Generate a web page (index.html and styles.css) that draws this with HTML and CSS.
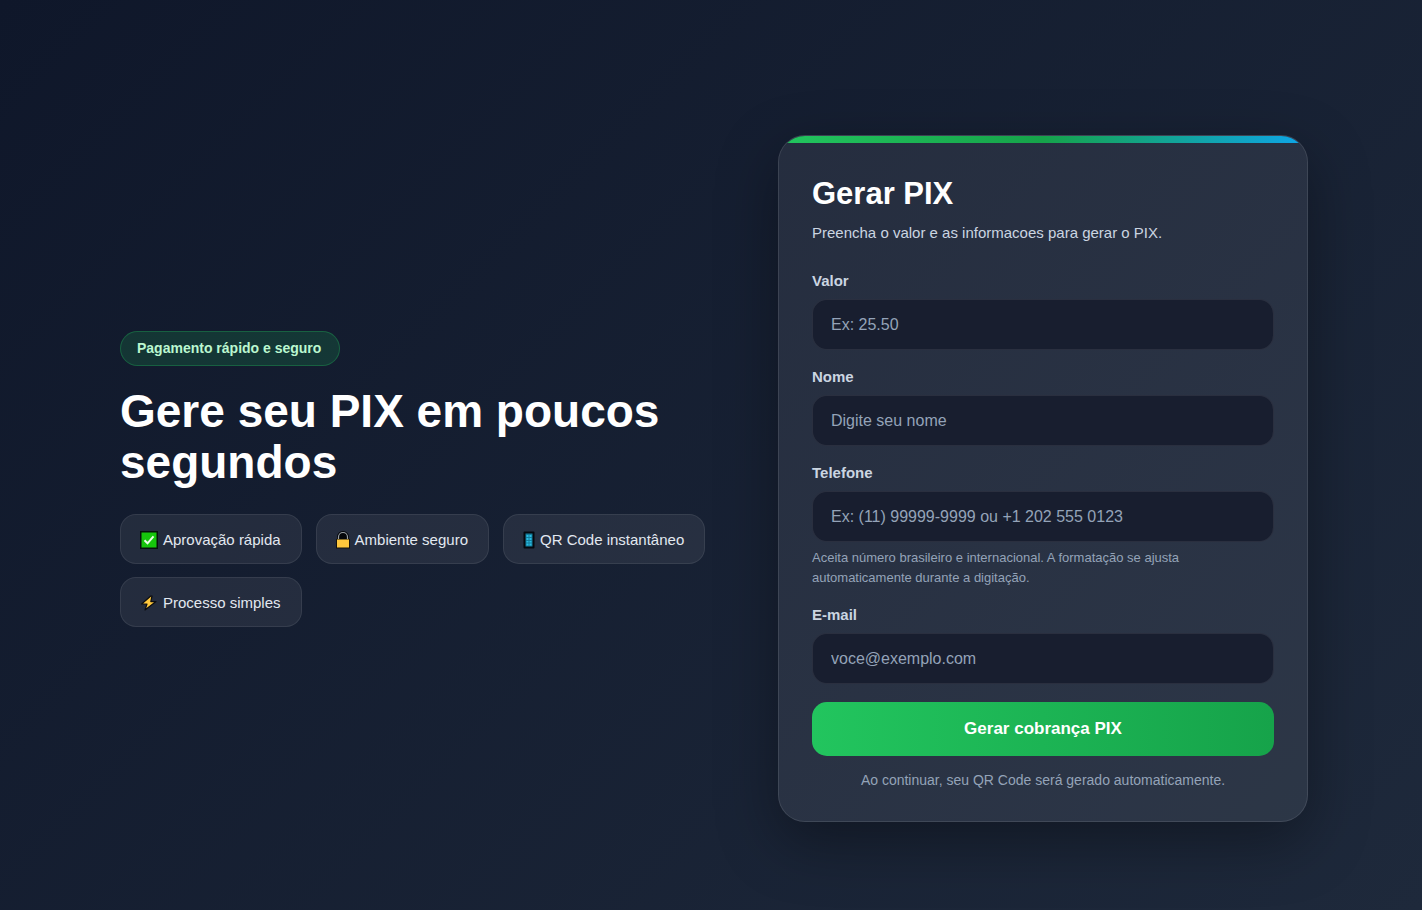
FILE: index.html
```html
<!DOCTYPE html>
<html lang="pt-BR">
<head>
<meta charset="utf-8">
<meta name="viewport" content="width=device-width, initial-scale=1">
<title>Gerar PIX</title>
<link rel="stylesheet" href="styles.css">
</head>
<body>
<main class="container">
  <section class="hero">
    <span class="badge">Pagamento rápido e seguro</span>
    <h1 class="hero-title">Gere seu PIX em poucos segundos</h1>
    <ul class="features">
      <li class="feature">
        <svg class="icon" width="18" height="18" viewBox="0 0 18 18" aria-hidden="true"><rect width="18" height="18" fill="#06120c"/><rect x="1.5" y="1.5" width="15" height="15" fill="#16c60c"/><path d="M4.500 9.300l3 3 6-7" fill="none" stroke="#e9ffe8" stroke-width="2"/></svg>
        Aprovação rápida
      </li>
      <li class="feature">
        <svg class="icon" width="14" height="18" viewBox="0 0 14 18" aria-hidden="true"><path d="M2 9V6a5 5 0 0 1 10 0v3z" fill="#05070b" stroke="#05070b" stroke-width="2"/><path d="M2.500 8V6a4.500 4.500 0 0 1 9 0v2" fill="none" stroke="#9aa0a6" stroke-width="1.200"/><path d="M0 8h14v9.500H0z" fill="#15120c"/><path d="M1 8.500h12v8H1z" fill="#ffc83d"/></svg>
        Ambiente seguro
      </li>
      <li class="feature">
        <svg class="icon" width="12" height="18" viewBox="0 0 12 18" aria-hidden="true"><rect x="0.500" y="0.500" width="11" height="17" rx="1" fill="#05090f"/><rect x="2.500" y="2.500" width="7" height="13" fill="#147d9b"/><path d="M3.500 4h2v2h-2zM6.500 4h2v2h-2zM3.500 7h2v2h-2zM6.500 7h2v2h-2zM3.500 10h2v1.500h-2zM6.500 10h2v1.500h-2zM3.500 12.500h2v2h-2zM6.500 12.500h2v2h-2z" fill="#28bce4"/></svg>
        QR Code instantâneo
      </li>
      <li class="feature">
        <svg class="icon" width="18" height="18" viewBox="0 0 18 18" aria-hidden="true"><path d="M10.800 2L1.600 10H7L5 16 16 7.600H10.800L12 2z" fill="#ffc83d" stroke="#0c0d10" stroke-width="1.200" stroke-linejoin="round"/></svg>
        Processo simples
      </li>
    </ul>
  </section>

  <section class="card">
    <h2 class="card-title">Gerar PIX</h2>
    <p class="card-subtitle">Preencha o valor e as informacoes para gerar o PIX.</p>
    <form class="form">
      <div class="field">
        <label class="label" for="valor">Valor</label>
        <input class="input" id="valor" type="text" inputmode="decimal" placeholder="Ex: 25.50">
      </div>
      <div class="field">
        <label class="label" for="nome">Nome</label>
        <input class="input" id="nome" type="text" placeholder="Digite seu nome">
      </div>
      <div class="field">
        <label class="label" for="telefone">Telefone</label>
        <input class="input" id="telefone" type="tel" placeholder="Ex: (11) 99999-9999 ou +1 202 555 0123" aria-describedby="telefone-hint">
        <small class="hint" id="telefone-hint">Aceita número brasileiro e internacional. A formatação se ajusta automaticamente durante a digitação.</small>
      </div>
      <div class="field">
        <label class="label" for="email">E-mail</label>
        <input class="input" id="email" type="email" placeholder="voce@exemplo.com">
      </div>
      <button class="submit" type="submit">Gerar cobrança PIX</button>
    </form>
    <p class="note">Ao continuar, seu QR Code será gerado automaticamente.</p>
  </section>
</main>
</body>
</html>
```
FILE: styles.css
```css
* {
  box-sizing: border-box;
  margin: 0;
  padding: 0;
}

body {
  min-height: 100vh;
  padding: 71px 24px 24px;
  display: flex;
  align-items: center;
  justify-content: center;
  font-family: "Liberation Sans", Arial, sans-serif;
  color: #fff;
  background: linear-gradient(135deg, #0f172a, #1e293b);
}

.container {
  width: 100%;
  max-width: 1194px;
  display: grid;
  grid-template-columns: minmax(0, 1fr) minmax(0, 530px);
  gap: 64px;
  align-items: center;
}

.hero {
  padding-left: 6px;
}

.badge {
  display: inline-block;
  padding: 8px 18px 8px 16px;
  border: 1px solid rgba(34, 197, 94, 0.3);
  border-radius: 999px;
  background: rgba(34, 197, 94, 0.16);
  color: #bbf7d0;
  font-size: 14px;
  line-height: 17px;
  font-weight: 700;
}

.hero-title {
  margin: 20px 0 26px;
  font-size: 46px;
  line-height: 51px;
}

.features {
  display: flex;
  flex-wrap: wrap;
  gap: 13px 14px;
  list-style: none;
}

.feature {
  display: flex;
  align-items: center;
  gap: 5px;
  padding: 16px 20px 14px 19px;
  border: 1px solid rgba(255, 255, 255, 0.08);
  border-radius: 16px;
  background: rgba(255, 255, 255, 0.07);
  color: #e2e8f0;
  font-size: 15px;
  line-height: 18px;
}

.icon {
  flex: none;
}

.card {
  position: relative;
  overflow: hidden;
  padding: 33px 33px 32px;
  border: 1px solid rgba(255, 255, 255, 0.1);
  border-radius: 27px;
  background: rgba(255, 255, 255, 0.07);
  box-shadow: 0 20px 60px rgba(0, 0, 0, 0.35);
}

.card::before {
  content: "";
  position: absolute;
  inset: 0 0 auto;
  height: 7px;
  background: linear-gradient(90deg, #22c55e, #16a34a, #0ea5e9);
}

.card-title {
  font-size: 31px;
  line-height: 50px;
}

.card-subtitle {
  margin: 2px 0 27px;
  color: #cbd5e1;
  font-size: 15px;
  line-height: 24px;
}

.form {
  display: grid;
  gap: 18px;
}

.label {
  display: block;
  margin-bottom: 9px;
  color: #cbd5e1;
  font-size: 15px;
  line-height: 18px;
  font-weight: 700;
}

.input {
  display: block;
  width: 100%;
  height: 51px;
  padding: 0 18px;
  border: 1px solid rgba(255, 255, 255, 0.08);
  border-radius: 15px;
  background: #181e2f;
  color: #fff;
  font: inherit;
  font-size: 16px;
}

.input::placeholder {
  color: #94a3b8;
}

.hint {
  display: block;
  margin-top: 6px;
  color: #94a3b8;
  font-size: 13px;
  line-height: 20px;
}

.submit {
  height: 54px;
  border: 0;
  border-radius: 15px;
  background: linear-gradient(90deg, #22c55e, #16a34a);
  color: #fff;
  font: inherit;
  font-size: 17px;
  font-weight: 700;
}

.note {
  margin-top: 15px;
  color: #94a3b8;
  font-size: 14px;
  line-height: 18px;
  text-align: center;
}

@media (max-width: 900px) {
  .container {
    grid-template-columns: minmax(0, 1fr);
  }
}
```
